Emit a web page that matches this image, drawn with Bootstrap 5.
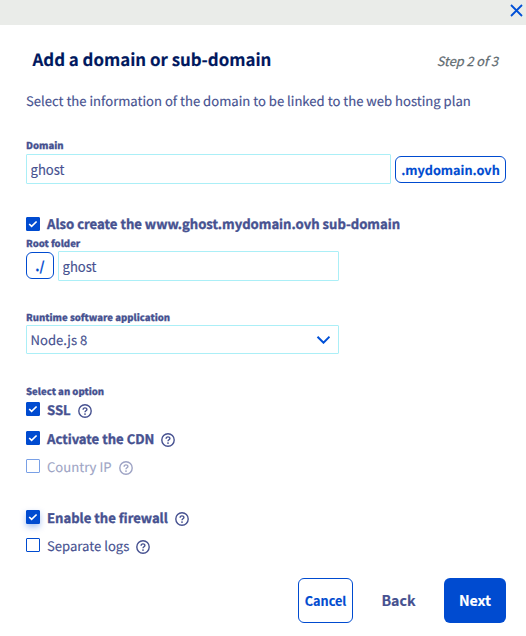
<!DOCTYPE html>
<html lang="en">
<head>
<meta charset="utf-8">
<meta name="viewport" content="width=device-width, initial-scale=1">
<title>Add a domain or sub-domain</title>
<link href="https://cdn.jsdelivr.net/npm/bootstrap@5.3.0/dist/css/bootstrap.min.css" rel="stylesheet">
<style>
:root{--ink:#465190;--blue:#004bd0;--line:#abeff7}
body{font-family:"Noto Sans CJK JP","Source Sans Pro",sans-serif;font-size:13.1px;line-height:20px;color:var(--ink);height:636px;overflow:hidden;text-rendering:geometricPrecision;-webkit-text-stroke:.15px}
.topbar{height:25px;background:#eaece9;padding:4px 3px 0 0}
.topbar svg{width:13px;height:13px}
.close-x{line-height:0}
.head-row{height:30px;margin-top:19px;padding:0 28px 0 32.5px}
.title{font-size:16.85px;line-height:30px;color:#00185e}
.step{font-size:12.7px;line-height:34px;color:#5f6b70;-webkit-text-stroke:.25px}
.main-col{padding:0 20px 0 26px}
.intro{margin-top:17px}
.cap{font-size:9.55px;line-height:14px;font-weight:900;-webkit-text-stroke:.25px}
.opt.fw-bold{-webkit-text-stroke:.35px}
.box{border:1px solid var(--line);height:30px;border-radius:1px;padding:0 4px 0 3.5px;color:var(--ink);font-size:13.1px;line-height:20px}
.box:focus{box-shadow:none;border-color:var(--line);color:var(--ink)}
.select-box{height:29px}
.w313{width:313px}
.tag{border:1px solid var(--blue);color:var(--blue);border-radius:6px;height:27px;font-weight:700}
.tag-domain{width:111px;font-size:12.7px;padding-top:2px}
.tag-root{width:28px;margin-bottom:2px;padding-top:1px}
.opt{height:20px;gap:7px}
.tick{appearance:none;width:14px;height:14px;flex:none;border:1px solid var(--blue);background:#fff;margin:0 0 1px;border-radius:1px}
.tick:checked{background:var(--blue) url("data:image/svg+xml,%3Csvg xmlns='http://www.w3.org/2000/svg' viewBox='0 0 12 12'%3E%3Cpath d='M2.2 6l2.4 2.3 5-4.8' fill='none' stroke='white' stroke-width='1.7'/%3E%3C/svg%3E") center/12px no-repeat}
.tick-up{margin-bottom:2px}
.halo{box-shadow:0 3px 6px rgba(0,80,215,.35)}
.q{width:14px;height:14px;flex:none;margin:2px 0 0 0}
.dim{opacity:.52}
.gap-intro{margin-top:27px}
.gap-tight{margin-top:2px}
.gap-hair{margin-top:1px}
.gap-small{margin-top:2px}
.gap-opt{margin-top:8px}
.gap-opt-lg{margin-top:9px}
.gap-section{margin-top:30px}
.gap-runtime{margin-top:29px}
.gap-group{margin-top:31px}
.gap-foot{margin-top:22px}
.act{height:45px;border-radius:6px;padding:0;font-weight:700}
.act-cancel{width:55px;border:1px solid var(--blue);color:var(--blue);font-size:12.7px}
.act-back{width:91px;color:var(--ink);font-size:14.2px;border:0}
.act-next{width:62px;background:var(--blue);color:#fff;font-size:14.2px;border:0}
</style>
</head>
<body class="bg-white">
<svg class="d-none" xmlns="http://www.w3.org/2000/svg">
<symbol id="help" viewBox="0 0 14 14"><circle cx="7" cy="7" r="6.2" fill="none" stroke="currentColor" stroke-width="1.4"/><path d="M5.1 5.7C5.1 3.2 8.9 3.3 8.9 5.5C8.9 6.8 7 6.8 7 8.2" fill="none" stroke="currentColor" stroke-width="1.4"/><circle cx="7" cy="10.1" r=".9" fill="currentColor"/></symbol>
</svg>
<div class="topbar d-flex justify-content-end"><a href="#" class="close-x" aria-label="Close"><svg viewBox="0 0 13 13"><path d="M1 1l11 11M12 1L1 12" stroke="#0050d7" stroke-width="1.8"/></svg></a></div>
<header class="head-row d-flex justify-content-between">
<h1 class="title fw-bold m-0">Add a domain or sub-domain</h1>
<em class="step">Step 2 of 3</em>
</header>
<main class="main-col d-flex flex-column">
<p class="intro mb-0 text-nowrap">Select the information of the domain to be linked to the web hosting plan</p>
<label class="cap gap-intro" for="domain">Domain</label>
<div class="gap-tight d-flex align-items-center gap-1">
<input id="domain" class="form-control box flex-fill" value="ghost">
<span class="tag tag-domain d-flex align-items-center justify-content-center flex-shrink-0">.mydomain.ovh</span>
</div>
<div class="opt gap-section d-flex align-items-center fw-bold"><input type="checkbox" class="tick" checked id="www"><label for="www">Also create the www.ghost.mydomain.ovh sub-domain</label></div>
<label class="cap gap-small" for="root">Root folder</label>
<div class="gap-hair d-flex align-items-center gap-1 w313">
<span class="tag tag-root d-flex align-items-center justify-content-center flex-shrink-0">./</span>
<input id="root" class="form-control box flex-fill" value="ghost">
</div>
<span class="cap gap-runtime">Runtime software application</span>
<div class="gap-hair box select-box w313 d-flex align-items-center justify-content-between pe-2"><span>Node.js 8</span><svg width="14" height="9" viewBox="0 0 14 9"><path d="M1.5 1.7l6 6 6-6" fill="none" stroke="#0050d7" stroke-width="2"/></svg></div>
<span class="cap gap-section">Select an option</span>
<div class="opt gap-small d-flex align-items-center fw-bold"><input type="checkbox" class="tick tick-up" checked id="ssl"><label for="ssl">SSL</label><svg class="q"><use href="#help"/></svg></div>
<div class="opt gap-opt-lg d-flex align-items-center fw-bold"><input type="checkbox" class="tick tick-up" checked id="cdn"><label for="cdn">Activate the CDN</label><svg class="q"><use href="#help"/></svg></div>
<div class="opt gap-opt d-flex align-items-center dim"><input type="checkbox" class="tick tick-up" id="cip" disabled><label for="cip">Country IP</label><svg class="q"><use href="#help"/></svg></div>
<div class="opt gap-group d-flex align-items-center fw-bold"><input type="checkbox" class="tick tick-up halo" checked id="fw"><label for="fw">Enable the firewall</label><svg class="q"><use href="#help"/></svg></div>
<div class="opt gap-opt d-flex align-items-center"><input type="checkbox" class="tick tick-up" id="logs"><label for="logs">Separate logs</label><svg class="q"><use href="#help"/></svg></div>
<footer class="gap-foot d-flex justify-content-end"><button class="btn act act-cancel">Cancel</button><button class="btn act act-back">Back</button><button class="btn act act-next">Next</button></footer>
</main>
<script src="https://cdn.jsdelivr.net/npm/bootstrap@5.3.0/dist/js/bootstrap.bundle.min.js"></script>
</body>
</html>
